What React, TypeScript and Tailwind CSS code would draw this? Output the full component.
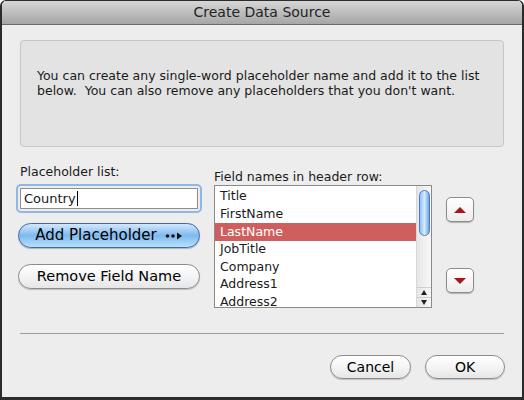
import React from 'react';

const FIELDS = ['Title', 'FirstName', 'LastName', 'JobTitle', 'Company', 'Address1', 'Address2'];

function PillButton({ children, className = '' }: { children: React.ReactNode; className?: string }) {
  return (
    <button
      className={`flex items-center justify-center rounded-full border border-[#8c8c8c] bg-gradient-to-b from-white via-[#f4f4f4] to-[#e6e6e6] shadow-[0_1px_1px_rgba(0,0,0,0.2)] text-black ${className}`}
    >
      {children}
    </button>
  );
}

function ArrowButton({ up }: { up?: boolean }) {
  return (
    <button className="flex h-[25px] w-[28px] items-center justify-center rounded-[5px] border border-[#8c8c8c] bg-gradient-to-b from-white to-[#ececec] shadow-[0_1px_1px_rgba(0,0,0,0.25)]">
      <svg width="14" height="8" viewBox="0 0 14 8">
        {up ? <path d="M1 7 L7 1 L13 7 Z" fill="#a8161a" /> : <path d="M1 1 L7 7 L13 1 Z" fill="#a8161a" />}
      </svg>
    </button>
  );
}

export default function App() {
  return (
    <div className="h-[400px] w-[524px] bg-white font-['DejaVu_Sans',sans-serif] text-[#1a1a1a]">
      <div className="flex h-full flex-col overflow-hidden rounded-t-[6px] border-x-2 border-t border-b-[3px] border-[#2b2b2b] bg-[#ededed]">
        {/* Title bar */}
        <div className="flex h-[24px] shrink-0 items-center justify-center border-b border-[#6a6a6a] bg-gradient-to-b from-[#d6d6d6] to-[#a6a6a6] text-[14px] text-[#222]">
          Create Data Source
        </div>

        {/* Info box */}
        <div className="mx-[18px] mt-[15px] h-[107px] rounded-[4px] border border-[#c6c6c6] bg-[#e3e3e3] px-[16px] pt-[27px] text-[12.5px] leading-[15px]">
          You can create any single-word placeholder name and add it to the list
          <br />
          below.&nbsp; You can also remove any placeholders that you don&apos;t want.
        </div>

        {/* Middle area */}
        <div className="mt-[17px] flex items-start pl-[16px]">
          {/* Left column */}
          <div className="flex w-[182px] flex-col">
            <div className="pl-[2px] text-[12.5px] leading-[15px]">Placeholder list:</div>
            <div className="mt-[7px] rounded-[3px] p-[2px] shadow-[0_0_0_2px_#8fb6e4]">
              <div className="flex h-[21px] items-center border border-[#8e8e8e] bg-white px-[3px] text-[13px]">
                Country<span className="ml-[1px] h-[15px] w-px bg-black" />
              </div>
            </div>
            <button className="mt-[12px] flex h-[25px] items-center justify-center gap-[8px] rounded-full border border-[#3f6aa6] bg-gradient-to-b from-[#d2e8fc] via-[#7fb9ef] to-[#b6e0fd] text-[15px] text-black shadow-[0_1px_1px_rgba(0,0,0,0.25)]">
              Add Placeholder
              <svg width="18" height="8" viewBox="0 0 18 8">
                <circle cx="2.5" cy="4" r="1.8" fill="#111" />
                <circle cx="8" cy="4" r="1.8" fill="#111" />
                <path d="M12 0.5 L17 4 L12 7.5 Z" fill="#111" />
              </svg>
            </button>
            <PillButton className="mt-[16px] h-[25px] text-[14.5px]">Remove Field Name</PillButton>
          </div>

          {/* Field list */}
          <div className="ml-[14px] mt-[5px] flex flex-col">
            <div className="text-[12.5px] leading-[15px]">Field names in header row:</div>
            <div className="mt-[1px] flex h-[123px] w-[218px] border border-[#8a8a8a] bg-white">
              <div className="flex flex-1 flex-col pt-[2px] text-[12.5px]">
                {FIELDS.map((f) => (
                  <div
                    key={f}
                    className={`flex h-[17.6px] items-center px-[5px] ${f === 'LastName' ? 'bg-[#cf5f5f] text-white' : ''}`}
                  >
                    {f}
                  </div>
                ))}
              </div>
              {/* Scrollbar */}
              <div className="flex w-[15px] flex-col border-l border-[#d8d8d8] bg-gradient-to-r from-[#e6e6e6] to-[#f8f8f8]">
                <div className="mx-auto mt-[4px] h-[46px] w-[11px] rounded-full border border-[#4d7fc0] bg-gradient-to-r from-[#8fc0f0] via-[#d6ebfd] to-[#6aa6e6]" />
                <div className="flex-1" />
                <div className="flex h-[10px] items-center justify-center border-t border-[#cfcfcf]">
                  <svg width="6" height="5" viewBox="0 0 6 5"><path d="M0 5 L3 0 L6 5 Z" fill="#222" /></svg>
                </div>
                <div className="flex h-[10px] items-center justify-center border-t border-[#cfcfcf]">
                  <svg width="6" height="5" viewBox="0 0 6 5"><path d="M0 0 L3 5 L6 0 Z" fill="#222" /></svg>
                </div>
              </div>
            </div>
          </div>

          {/* Arrow buttons */}
          <div className="ml-[14px] mt-[33px] flex flex-col gap-[46px]">
            <ArrowButton up />
            <ArrowButton />
          </div>
        </div>

        {/* Separator */}
        <div className="mx-[18px] mt-[25px] h-px bg-[#9a9a9a]" />

        {/* Bottom buttons */}
        <div className="mt-[21px] flex justify-end gap-[14px] pr-[17px]">
          <PillButton className="h-[24px] w-[81px] text-[14px]">Cancel</PillButton>
          <PillButton className="h-[24px] w-[80px] text-[14px]">OK</PillButton>
        </div>
      </div>
    </div>
  );
}
